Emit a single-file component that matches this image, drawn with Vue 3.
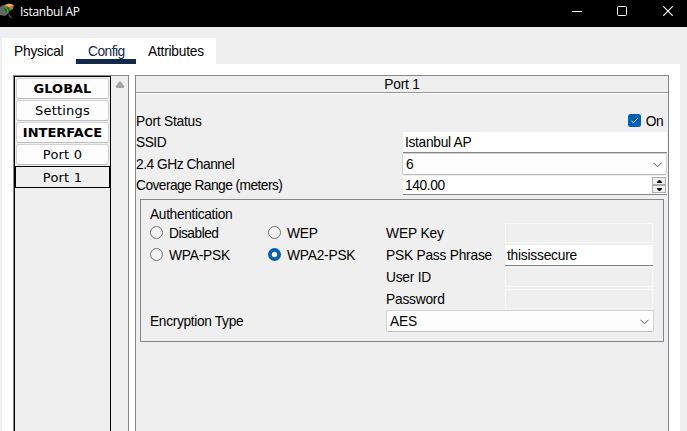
<script setup>
import { ref } from 'vue'

const tabs = ['Physical', 'Config', 'Attributes']
const activeTab = ref('Config')
const menu = [
  { label: 'GLOBAL', head: true },
  { label: 'Settings' },
  { label: 'INTERFACE', head: true },
  { label: 'Port 0' },
  { label: 'Port 1', current: true },
]
const modes = [
  { label: 'Disabled', cls: 't-disabled' },
  { label: 'WEP', cls: 't-wep' },
  { label: 'WPA-PSK', cls: 't-wpa' },
  { label: 'WPA2-PSK', cls: 't-wpa' },
]
const mode = ref('WPA2-PSK')
const keys = [
  { label: 'WEP Key', cls: 't-wepkey', value: '' },
  { label: 'PSK Pass Phrase', cls: 't-psk', value: 'thisissecure' },
  { label: 'User ID', cls: 't-user', value: '' },
  { label: 'Password', cls: 't-pass', value: '' },
]
</script>

<template>
  <div class="window">
    <header class="titlebar">
      <svg class="logo" width="15" height="20" viewBox="0 0 15 20">
        <path d="M0 7 L3 5 L9 8 L9 13 L5 16 L0 15Z" fill="#626762" />
        <path d="M4 5 L9 3.5 L14 5 L13 9 L9 11 L5 8Z" fill="#a77b2c" />
        <path d="M5 5 L9 4 L13.5 5 L10 7Z" fill="#e6bb65" />
        <path d="M4 8 L8 7 L10 9 L9 13 L6 13Z" fill="#147520" />
        <path d="M6 8 L8 10 L7 13" stroke="#39a744" fill="none" />
        <path d="M8.5 14.5 L11.5 18" stroke="#454b4b" stroke-width="1.3" />
      </svg>
      <span class="title">Istanbul AP</span>
      <div class="controls">
        <svg width="10" height="11" viewBox="0 0 10 11"><path d="M0 6.5H10" stroke="#fff" /></svg>
        <svg width="10" height="11" viewBox="0 0 10 11"><rect x=".5" y="1.5" width="9" height="9" rx="1" stroke="#fff" fill="none" /></svg>
        <svg width="10" height="11" viewBox="0 0 10 11"><path d="M.3 1.3L9.7 10.7M9.7 1.3L.3 10.7" stroke="#fff" stroke-width="1.2" /></svg>
      </div>
    </header>

    <nav class="tabs">
      <div v-for="t in tabs" :key="t" class="tab" :class="['tab-' + t.toLowerCase(), { active: t === activeTab }]" @click="activeTab = t"><span>{{ t }}</span></div>
    </nav>

    <main class="page">
      <aside class="side">
        <div class="list">
          <div v-for="m in menu" :key="m.label" class="item" :class="{ head: m.head, current: m.current }">{{ m.label }}</div>
        </div>
        <div class="scroll">
          <svg width="10" height="8" viewBox="0 0 10 8"><path d="M4 .8Q5 0 6 .8L9.3 5.5Q9.3 7 8 7H2Q.7 7 .7 5.5Z" fill="#a3a3a3" /></svg>
        </div>
      </aside>

      <section class="panel">
        <h1 class="heading"><span>Port 1</span></h1>
        <div class="row status">
          <span>Port Status</span>
          <label class="check">
            <svg width="13" height="13" viewBox="0 0 13 13"><rect width="13" height="13" rx="2.5" fill="#005fb8" /><path d="M3.3 6.7L5.4 8.8L9.7 4.4" stroke="#d5e8f8" fill="none" /></svg>
            <span>On</span>
          </label>
        </div>
        <div class="row ssid"><span class="t-ssid">SSID</span><div class="field"><span class="t-name">Istanbul AP</span></div></div>
        <div class="row channel">
          <span class="t-channel">2.4 GHz Channel</span>
          <div class="combo"><span>6</span>
            <svg width="9" height="6" viewBox="0 0 9 6"><path d="M.5 .8L4.5 4.8L8.5 .8" stroke="#555" fill="none" /></svg>
          </div>
        </div>
        <div class="row range">
          <span class="t-range">Coverage Range (meters)</span>
          <div class="field spin"><span class="t-num">140.00</span>
            <div class="steps">
              <i><svg width="5" height="3" viewBox="0 0 5 3"><path d="M2 0H3L5 2V3H0V2Z" /></svg></i>
              <i><svg width="5" height="3" viewBox="0 0 5 3"><path d="M0 0H5V1L3 3H2L0 1Z" /></svg></i>
            </div>
          </div>
        </div>

        <div class="group">
          <div class="caption"><span class="t-auth">Authentication</span></div>
          <div class="auth">
            <div class="modes">
              <label v-for="m in modes" :key="m.label" class="radio" @click="mode = m.label">
                <svg width="13" height="13" viewBox="0 0 13 13">
                  <template v-if="m.label === mode"><circle cx="6.5" cy="6.5" r="6.5" fill="#005fb8" /><circle cx="6.5" cy="6.5" r="2.7" fill="#fff" /></template>
                  <circle v-else cx="6.5" cy="6.5" r="6" fill="#f3f3f3" stroke="#707070" />
                </svg>
                <span :class="m.cls">{{ m.label }}</span>
              </label>
            </div>
            <div class="keys">
              <div v-for="k in keys" :key="k.label" class="key">
                <span :class="k.cls">{{ k.label }}</span>
                <div class="field" :class="{ off: !k.value }"><span>{{ k.value }}</span></div>
              </div>
            </div>
          </div>
          <div class="enc">
            <span class="t-enc">Encryption Type</span>
            <div class="combo"><span>AES</span>
              <svg width="9" height="6" viewBox="0 0 9 6"><path d="M.5 .8L4.5 4.8L8.5 .8" stroke="#555" fill="none" /></svg>
            </div>
          </div>
        </div>
      </section>
    </main>
  </div>
</template>

<style>
body { margin: 0; background: #efefef; overflow: hidden; }
</style>

<style scoped>
* { box-sizing: border-box; }
svg { display: block; flex: none; }
.window { width: 687px; height: 431px; display: flex; flex-direction: column; overflow: hidden; background: #efefef; color: #000; font: 13.75px/16px "Liberation Sans", Arial, sans-serif; letter-spacing: -.22px; white-space: nowrap; }
.titlebar { height: 27px; flex: none; display: flex; background: #000; color: #fff; }
.title { margin: 4px 0 0 5px; font: 12px/16px "Open Sans", "Noto Sans", sans-serif; letter-spacing: -.3px; }
.controls { margin: 5px 14px 0 auto; display: grid; grid-template-columns: 45px 46px 10px; }
.tabs { margin: 11px 0 0 2px; width: 214px; height: 26px; flex: none; display: flex; background: #fff; }
.tab { padding: 6px 0 0 12px; }
.tab-physical { width: 74px; }
.tab-config { width: 60px; letter-spacing: -.5px; }
.tab-attributes { letter-spacing: -.22px; }
.active { color: #10294d; border-bottom: 5px solid #10294d; }
.page { flex: 1; margin: 0 7px 0 2px; padding: 11px 11px 0; display: flex; gap: 6px; background: #fff; }
.side { width: 116px; flex: none; display: flex; border: 1px solid #84858f; border-bottom: 0; background: #efefef; }
.list { width: 97px; border: 1px solid #000; border-bottom: 0; padding: 1px 1px 0; font: 13px/18px "DejaVu Sans", sans-serif; letter-spacing: .2px; text-align: center; }
.item { height: 21px; margin-bottom: 1px; border: 1px solid #ccc; border-color: #d2d2d2 #d0d0d0 #bdbdbd; border-radius: 3px; background: #fdfdfd; line-height: 19px; }
.item.head { font-weight: 700; letter-spacing: 0; }
.item.current { margin: 0 -1px; height: 22px; border: 1px solid #000; border-radius: 0; background: #efefef; line-height: 21px; }
.scroll { padding: 5px 0 0 4px; }
.panel { width: 534px; flex: none; border: 1px solid #84858f; border-bottom: 0; background: #efefef; }
.heading { margin: 0; height: 18px; padding-top: 1px; border-bottom: 1px solid #fff; box-shadow: inset 0 -1px #96979b; font: inherit; text-align: center; }
.row { display: flex; align-items: center; }
.row > span { width: 267px; flex: none; }
.status { height: 18px; margin-top: 18px; padding-top: 1px; }
.check { margin: -2px 5px 0 auto; display: flex; align-items: center; gap: 5px; letter-spacing: -.6px; }
.check span { padding-top: 2px; }
.ssid { height: 21px; margin-top: 2px; }
.channel { height: 22px; }
.channel > span { padding-top: 1px; }
.channel .combo { margin-left: -1px; }
.range { height: 20px; }
.range > span { padding-top: 1px; }
.field { width: 264px; height: 21px; padding: 3px 2px 0; background: #fff; border: 0; border-bottom: 1px solid #868686; }
.range .field { height: 19px; margin-top: 1px; }
.combo { width: 265px; height: 22px; padding: 0 4px 0 3px; display: flex; align-items: center; justify-content: space-between; border: 1px solid #d2d2d2; border-bottom-color: #bcbcbc; border-radius: 2px; background: #fdfdfd; }
.combo svg { margin-top: 1px; }
.combo span { padding-top: 1px; }
.spin { padding: 1px 1px 1px 2px; display: flex; justify-content: space-between; }
.spin .t-num { padding-top: 1px; }
.steps { width: 14px; height: 16px; display: grid; grid-template-rows: 8px 8px; }
.steps i { display: flex; align-items: center; justify-content: center; border: 1px solid #adadad; background: #f0f0f0; }
.group { margin: 4px 4px 0; height: 143px; padding: 7px 9px 0; border: 1px solid #84858f; }
.caption { height: 17px; }
.auth { display: flex; }
.modes { width: 236px; display: grid; grid-template-columns: 118px 118px; grid-template-rows: 22px 22px; }
.radio { display: flex; align-items: center; gap: 6px; height: 19px; }
.radio svg { margin-top: -2px; }
.keys { display: grid; grid-template-rows: repeat(4, 22px); margin-top: -1px; }
.key { display: flex; height: 20px; line-height: 20px; }
.key > span { width: 119px; padding-top: 1px; }
.key .field { width: 148px; height: 21px; padding: 1px 2px; }
.key .field.off { height: 20px; border: 1px solid #f8f8f8; background: #efefef; }
.enc { display: flex; align-items: center; margin-top: -1px; }
.enc > span { width: 236px; padding-top: 1px; }
.enc .combo { width: 268px; }
.t-range { letter-spacing: -.55px; }
.t-channel { letter-spacing: -.48px; }
.t-ssid { letter-spacing: -.5px; }
.t-num { letter-spacing: -.4px; }
.t-auth, .t-enc { letter-spacing: -.34px; }
.t-disabled { letter-spacing: -.5px; }
.t-name { letter-spacing: -.3px; }
.t-wepkey { letter-spacing: -.1px; }
</style>
